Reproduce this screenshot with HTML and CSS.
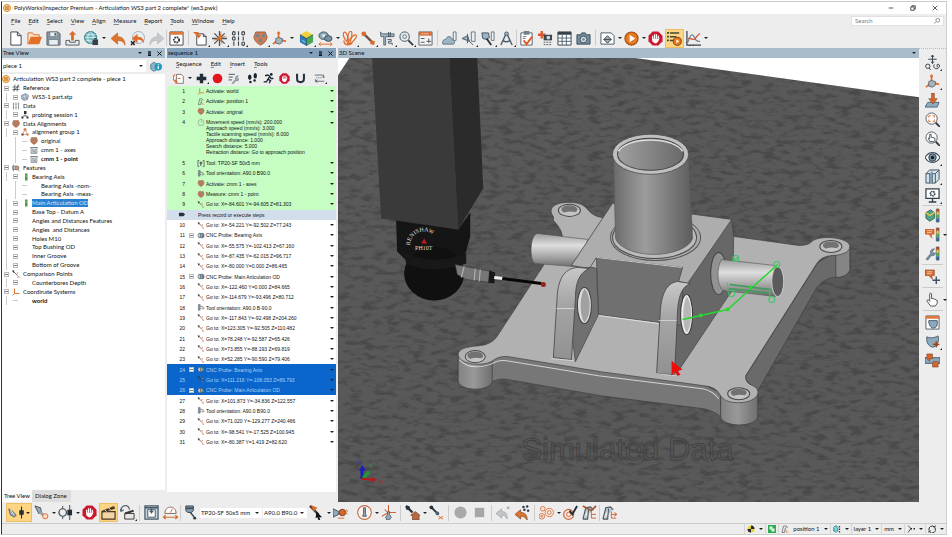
FILE: index.html
```html
<!DOCTYPE html>
<html lang="en">
<head>
<meta charset="utf-8">
<title>PolyWorks|Inspector Premium</title>
<link rel="stylesheet" href="styles.css">
</head>
<body>
<svg class="defs" aria-hidden="true">
  <symbol id="logo" viewBox="0 0 16 16"><circle cx="8" cy="8" r="7" fill="#f6d9a8" stroke="#e08a1e" stroke-width="2"/><path d="M6 4v8M10 4v8" stroke="#b5560e" stroke-width="2"/></symbol>
  <symbol id="new" viewBox="0 0 16 16"><path d="M3 1h7l4 4v10H3zM10 1v4h4" fill="#fff" stroke="#3b4249"/></symbol>
  <symbol id="open" viewBox="0 0 16 16"><path d="M1 14V2h5l1 2h6v3" fill="#fbe0cc" stroke="#e0702a"/><path d="M1 14L4 6h12l-3 8z" fill="#e0702a"/></symbol>
  <symbol id="save" viewBox="0 0 16 16"><path d="M1 1h12l2 2v12H1z" fill="#8b98a3" stroke="#5c6871"/><path d="M4 1h8v5H4zM3 9h10v6H3z" fill="#e8edf1" stroke="#5c6871" stroke-width=".7"/><path d="M9 2h2v3H9z" fill="#5c6871"/></symbol>
  <symbol id="export" viewBox="0 0 16 16"><path d="M1 10v5h14v-5h-4v2H5v-2z" fill="#e7ebee" stroke="#4c565e"/><path d="M8 0l4 4H9.500v6h-3V4H4z" fill="#df6a2a"/></symbol>
  <symbol id="globe" viewBox="0 0 16 16"><circle cx="7" cy="7" r="6.500" fill="#74b3bd" stroke="#2f7d8a"/><path d="M1 7h12M7 1c-4 3-4 9 0 12M7 1c4 3 4 9 0 12M2 4h10M2 10h10" stroke="#e7f6f8" fill="none" stroke-width=".8"/><path d="M9 9h6v6H9z" fill="#34424d"/><path d="M11 9V8h2v1" stroke="#34424d" fill="none"/></symbol>
  <symbol id="undo" viewBox="0 0 16 16"><path d="M0 8l7-6v4c5 0 8 3 8 9-2-4-4-5-8-5v4z" fill="#e0742d" stroke="#b9500f" stroke-width=".6"/></symbol>
  <symbol id="undox" viewBox="0 0 16 16"><circle cx="9" cy="7" r="6.500" fill="#e8edf0" stroke="#a3aeb7"/><path d="M2 8l6-5v3c5 0 7 3 7 7-2-3-4-4-7-4v4z" fill="#df6a2a"/><path d="M1 11l4 4M5 11l-4 4" stroke="#222" stroke-width="1.500"/></symbol>
  <symbol id="redo" viewBox="0 0 16 16"><path d="M16 8L9 2v4c-5 0-8 3-8 9 2-4 4-5 8-5v4z" fill="#c6c9cb" stroke="#b0b4b7" stroke-width=".6"/></symbol>
  <symbol id="setwin" viewBox="0 0 16 16"><path d="M1 1h14v14H1z" fill="#fff" stroke="#3f4850"/><path d="M1 1h14v3H1z" fill="#df7a3c"/><circle cx="8" cy="9.500" r="2.800" fill="none" stroke="#2e3940" stroke-width="2" stroke-dasharray="1.800 .8"/></symbol>
  <symbol id="docin" viewBox="0 0 16 16"><path d="M4 3h7l3 3v9H4z" fill="#fff" stroke="#3f4850"/><path d="M11 3v3h3" fill="none" stroke="#3f4850"/><path d="M0 1h6v3h3L6 8 3 4h0z" fill="#df6a2a"/></symbol>
  <symbol id="star" viewBox="0 0 16 16"><path d="M8 0v16M0 8h16M2.500 2.500l11 11M13.500 2.500l-11 11" stroke="#4a545c" stroke-width="1.400"/><path d="M10 0L7 7l-6 3 7-1 3 6-1-7 6-3-6 1z" fill="#dd7331"/></symbol>
  <symbol id="bits" viewBox="0 0 16 16"><g fill="none" stroke="#39444c" stroke-width="1.200"><ellipse cx="3" cy="2.500" rx="1.500" ry="1.800"/><path d="M8 .3v4.400"/><ellipse cx="13" cy="2.500" rx="1.500" ry="1.800"/><ellipse cx="3" cy="8" rx="1.500" ry="1.800"/><path d="M8 5.800v4.400M13 5.800v4.400M3 11.300v4.400M8 11.300v4.400"/><ellipse cx="13" cy="13.500" rx="1.500" ry="1.800"/></g></symbol>
  <symbol id="shield" viewBox="0 0 16 16"><path d="M3 1h10l2 5c0 4-3 7-7 9-4-2-7-5-7-9z" fill="#d97a4c" stroke="#7d5038" stroke-width=".8"/><circle cx="5" cy="5" r="2" fill="#77848e"/><circle cx="11" cy="5" r="2" fill="#77848e"/><circle cx="8" cy="10" r="2.200" fill="#77848e"/></symbol>
  <symbol id="axes" viewBox="0 0 16 16"><path d="M7 9V1M7 9l8 2M7 9l-6 5" stroke="#df6a2a" stroke-width="1.800"/><path d="M4 8l3-1 4 1v4l-3 2-4-1z" fill="#a7b2ba" stroke="#4c565e" stroke-width=".8"/><path d="M5 3l2-3 2 3z" fill="#df6a2a"/></symbol>
  <symbol id="cube" viewBox="0 0 16 16"><path d="M8 0l7 4-7 4-7-4z" fill="#f0d23a"/><path d="M1 4l7 4v8l-7-4z" fill="#3577b4"/><path d="M15 4L8 8v8l7-4z" fill="#48a857"/><path d="M1 4l7 4 7-4M8 8v8" stroke="#25435f" fill="none" stroke-width=".8"/><path d="M3 9l4 2v2l-4-2z" fill="#52b8ce"/></symbol>
  <symbol id="gauge" viewBox="0 0 16 16"><ellipse cx="6" cy="5" rx="5" ry="4" fill="#90a9bb" stroke="#3c5261"/><ellipse cx="11" cy="8" rx="4" ry="3" fill="#7790a3" stroke="#3c5261"/><circle cx="6" cy="5" r="1.500" fill="#eee"/><path d="M1 14h14M3 12l-2 2 2 2M13 12l2 2-2 2" fill="none" stroke="#df6a2a"/></symbol>
  <symbol id="rings" viewBox="0 0 16 16"><g fill="none" stroke="#df6a2a" stroke-width="1.300"><ellipse cx="4" cy="6" rx="2" ry="5" transform="rotate(-20 4 6)"/><ellipse cx="8" cy="7" rx="2" ry="7" transform="rotate(12 8 7)"/><ellipse cx="11" cy="9" rx="2" ry="6" transform="rotate(42 11 9)"/><path d="M2 10c0 5 5 6 9 3"/></g></symbol>
  <symbol id="bone" viewBox="0 0 16 16"><path d="M3 3l10 10" stroke="#6c5344" stroke-width="2.500"/><circle cx="3" cy="3" r="2.500" fill="#df6a2a"/><path d="M10 10l5 1-1 4-4-1z" fill="#df6a2a"/></symbol>
  <symbol id="caliper" viewBox="0 0 16 16"><path d="M0 1l3 2h12v3H6v9H4V6H1z" fill="#9fb3c3" stroke="#465661" stroke-width=".8"/><path d="M9 1v5h2V1M8 9h4v2H9v2h4v2" fill="none" stroke="#465661"/></symbol>
  <symbol id="mag" viewBox="0 0 16 16"><circle cx="6" cy="6" r="5" fill="#e5ecf1" stroke="#68757f" stroke-width="1.300"/><path d="M10 10l5 5" stroke="#313c44" stroke-width="2"/><circle cx="6" cy="6" r="2" fill="none" stroke="#68757f"/></symbol>
  <symbol id="report" viewBox="0 0 16 16"><path d="M1 1h14v14H1z" fill="#f4f4f4" stroke="#59646c"/><path d="M1 1h14v4H1z" fill="#d8713d"/><path d="M3 8h4M3 12h4M9 11h5M11.500 8v5" stroke="#4c565e"/><path d="M4 3h8" stroke="#fff" stroke-dasharray="1 1"/></symbol>
  <symbol id="cloud" viewBox="0 0 16 16"><path d="M1 14c-1-4 1-5 3-5 1-4 6-4 7 0 3 0 3 5 1 5z" fill="#9db4c5" stroke="#5f7686"/><path d="M12 1h3v9h-3z" fill="#eee" stroke="#68757f"/></symbol>
  <symbol id="tri" viewBox="0 0 16 16"><path d="M1 8l6-3 2 6z" fill="#9db4c5" stroke="#4e5c67"/><path d="M11 1h4v10h-4z" fill="#eee" stroke="#68757f"/><path d="M8 10l5 5M7 3v10" stroke="#4e5c67"/></symbol>
  <symbol id="probe" viewBox="0 0 16 16"><path d="M2 2h7l1 5-3 2-4-1z" fill="#9db4c5" stroke="#3f505e"/><path d="M7 8l5 7" stroke="#2b3740" stroke-width="2"/><path d="M12 1h3v9h-3z" fill="#eee" stroke="#68757f"/></symbol>
  <symbol id="tool" viewBox="0 0 16 16"><path d="M3 1h8v5l-2 2H5L3 6z" fill="#8298a8" stroke="#3b4a55"/><path d="M3 3.500h8M8 8l4 5" stroke="#3b4a55" stroke-width="1.500"/><circle cx="12.500" cy="14" r="1.600" fill="#2b3740"/></symbol>
  <symbol id="compass" viewBox="0 0 16 16"><path d="M8 2L2 15M8 2l6 13M4 10q4 3 8 0" fill="none" stroke="#4d5c68" stroke-width="1.500"/><circle cx="8" cy="3" r="2" fill="#9db4c5" stroke="#4d5c68"/></symbol>
  <symbol id="clip" viewBox="0 0 16 16"><path d="M2 2h12v13H2z" fill="#fff" stroke="#53606a"/><path d="M5 0h6v4H5z" fill="#71808b"/><path d="M5 10l3 4 6-8" fill="none" stroke="#df5a22" stroke-width="2"/><path d="M4 6h4M4 8h3" stroke="#71808b"/></symbol>
  <symbol id="camplus" viewBox="0 0 16 16"><path d="M4 0v8M0 4h8" stroke="#dc5b2b" stroke-width="2.500"/><path d="M6 4h9v6H6z" fill="#3d464e"/><circle cx="11" cy="7" r="2" fill="#cfd8de"/><path d="M6 12h9M6 14.500h9" stroke="#555f67" stroke-dasharray="2 1"/></symbol>
  <symbol id="grid" viewBox="0 0 16 16"><path d="M1 1h14v14H1z" fill="#fff" stroke="#34424d"/><path d="M1 1h14v3H1z" fill="#34424d"/><path d="M1 7.500h14M1 11h14M5.500 4v11M10 4v11" stroke="#4d6272"/></symbol>
  <symbol id="cam" viewBox="0 0 16 16"><path d="M1 4h4l1-2h4l1 2h4v10H1z" fill="#748a9a" stroke="#3b4e5c"/><circle cx="8" cy="9" r="3.500" fill="#dde5ea" stroke="#3b4e5c"/><circle cx="8" cy="9" r="1.500" fill="#748a9a"/></symbol>
  <symbol id="layers" viewBox="0 0 16 16"><path d="M1 2h11l3 3v9H1z" fill="#fff" stroke="#4d575f"/><path d="M4 9l4-4 4 4-4 4zM4 9h8" fill="#9fb0bb" stroke="#3b454d"/></symbol>
  <symbol id="play" viewBox="0 0 16 16"><circle cx="8" cy="8" r="7" fill="#e77a1e" stroke="#a04611" stroke-width="1.200"/><path d="M6 4l6 4-6 4z" fill="#fff"/></symbol>
  <symbol id="stop" viewBox="0 0 16 16"><path d="M5 .5h6L15.500 5v6L11 15.500H5L.5 11V5z" fill="#cc1730"/><path d="M5 9V5M7 8V3.500M9 8V3.500M11 8V5" stroke="#fff" stroke-width="1.300" fill="none"/><path d="M4.500 8H11l1.500-1-1.500 4-2 2H7l-2.500-2z" fill="#fff"/></symbol>
  <symbol id="steps" viewBox="0 0 16 16"><path d="M3 2h10M3 6h7M3 10h4" stroke="#414a36" stroke-width="1.600"/><path d="M0 2h2M0 6h2M0 10h2" stroke="#414a36" stroke-width="2"/><circle cx="11" cy="11" r="4.300" fill="#e77a1e" stroke="#823d10"/><path d="M10 9l3 2-3 2z" fill="#fff"/></symbol>
  <symbol id="chart" viewBox="0 0 16 16"><path d="M1 0v15h15M1 12h-1M4 15v1M8 15v1" fill="none" stroke="#35424c" stroke-width="1.300"/><path d="M2 12c3-9 5-10 7-5s4 4 6 4" fill="none" stroke="#6b8394" stroke-width="1.300"/><path d="M2 8c4-1 6 3 8 0s3-5 5-5" fill="none" stroke="#d95630" stroke-width="1.300"/></symbol>
  <symbol id="info" viewBox="0 0 16 16"><path d="M1 6l4-3 4 2v8l-4 2-4-3z" fill="#91b2c6" stroke="#3f6a82"/><circle cx="11" cy="9" r="5" fill="#1f9cc4"/><path d="M11 8v4M11 5.500v1.500" stroke="#fff" stroke-width="1.600"/></symbol>
  <symbol id="plus" viewBox="0 0 16 16"><path d="M8 1v14M1 8h14" stroke="#1f2d3a" stroke-width="5"/></symbol>
  <symbol id="rec" viewBox="0 0 16 16"><circle cx="8" cy="8" r="7" fill="#e2141c"/></symbol>
  <symbol id="props" viewBox="0 0 16 16"><path d="M1 2h9M1 6h6M1 10h5" stroke="#6b7780" stroke-width="1.500"/><path d="M6 15l5-6c-1-3 1-5 4-5l-2 3 2 2 1-1c0 3-2 4-4 3l-5 5z" fill="#9fabb4" stroke="#5b666f" stroke-width=".7"/></symbol>
  <symbol id="feet" viewBox="0 0 16 16"><ellipse cx="4" cy="6" rx="2.500" ry="4" fill="#182531"/><circle cx="5" cy="13" r="1.800" fill="#182531"/><ellipse cx="12" cy="4" rx="2.500" ry="4" fill="#182531"/><circle cx="11" cy="11" r="1.800" fill="#182531"/></symbol>
  <symbol id="run" viewBox="0 0 16 16"><circle cx="12" cy="2" r="2" fill="#182531"/><path d="M3 4l4-1 3 2-3 4 4 2-2 4M7 9l-2 4H1M9 5l3 3h3" fill="none" stroke="#182531" stroke-width="1.900"/></symbol>
  <symbol id="magnet" viewBox="0 0 16 16"><path d="M3 1v7c0 7 10 7 10 0V1" fill="none" stroke="#26343f" stroke-width="3"/></symbol>
  <symbol id="loop" viewBox="0 0 16 16"><path d="M1 3h13v4M12 5l2 2 2-2M15 12H2V9M5 10l-3 2 3 2" fill="none" stroke="#5b6770" stroke-width="1.300"/><path d="M3 7h8" stroke="#5b6770" stroke-dasharray="2 1"/></symbol>
  <symbol id="seqdoc" viewBox="0 0 16 16"><path d="M5 2h7l3 3v10H5z" fill="#fff" stroke="#5a4a42"/><path d="M3 2C-1 5-1 12 5 13M3 10l3 3-3 2M7 8h4" fill="none" stroke="#e06a2c" stroke-width="1.500"/></symbol>
  <symbol id="move" viewBox="0 0 16 16"><path d="M8 0v9M3.500 4.500h9M6.500 2L8 0l1.500 2M6.500 7L8 9l1.500-2" fill="none" stroke="#303c46"/><circle cx="3" cy="12" r="2.300" fill="none" stroke="#303c46"/><path d="M4.500 14L6 16M10 10c-2 3 1 6 4 4s1-5-1-4v3" fill="none" stroke="#303c46"/></symbol>
  <symbol id="plane" viewBox="0 0 16 16"><path d="M3 10h12l-2 5H0z" fill="#91adc1" stroke="#496376"/><path d="M7 0h3v6h3l-4.500 6L4 6h3z" fill="#d9652a" stroke="#7c4830" stroke-width=".6"/></symbol>
  <symbol id="fit" viewBox="0 0 16 16"><circle cx="7" cy="7" r="6" fill="#fff" stroke="#4d5a64"/><path d="M4 6V4h2M8 4h2v2M10 8v2H8M6 10H4V8" fill="none" stroke="#df6a2a"/><path d="M11.500 11.500L16 16" stroke="#303c46" stroke-width="2"/></symbol>
  <symbol id="handmag" viewBox="0 0 16 16"><circle cx="7" cy="7" r="6" fill="#fff" stroke="#4d5a64"/><path d="M5 11L3.500 7.500 5 8V3.500h1.500v3l4 1V10l-1 1.500z" fill="#fff" stroke="#36424c" stroke-width=".9"/><path d="M11.500 11.500L16 16" stroke="#303c46" stroke-width="2"/></symbol>
  <symbol id="eye" viewBox="0 0 16 16"><path d="M0 8c4-7 12-7 16 0-4 7-12 7-16 0z" fill="#fff" stroke="#41505c" stroke-width="1.200"/><circle cx="8" cy="8" r="4" fill="#7890a2" stroke="#2f3c46"/><circle cx="8" cy="8" r="1.800" fill="#131c23"/></symbol>
  <symbol id="box" viewBox="0 0 16 16"><path d="M1 5l4-4h10v10l-4 4H1z" fill="#d8e2e9" stroke="#41505c"/><path d="M1 5h10v10M11 5l4-4M5 5v10M8 5v10" fill="none" stroke="#41505c"/><path d="M5 5l3-4v14H5z" fill="#7fa0b8"/></symbol>
  <symbol id="monitor" viewBox="0 0 16 16"><path d="M1 1h14v10H1z" fill="#fff" stroke="#34404a" stroke-width="1.300"/><path d="M4 15h8M8 11v4" stroke="#34404a" stroke-width="1.500"/><circle cx="8" cy="6" r="2.300" fill="none" stroke="#34404a" stroke-width="1.700" stroke-dasharray="1.500 .6"/></symbol>
  <symbol id="cmap" viewBox="0 0 16 16"><path d="M12 1h3v4h-3z" fill="#d9402b"/><path d="M12 4h3v3h-3z" fill="#f0cb36"/><path d="M12 7h3v4h-3z" fill="#58b34f"/><path d="M12 11h3v4h-3z" fill="#2f67b5"/><path d="M12 1h3v14h-3z" fill="none" stroke="#455" stroke-width=".6"/></symbol>
  <symbol id="cubemap" viewBox="0 0 16 16"><path d="M1 5l5-3 4 3v6l-5 3-4-3z" fill="#4fa28a" stroke="#35624f"/><path d="M1 5l4 3 5-3" fill="none" stroke="#f0cb36" stroke-width="1.500"/><use href="#cmap"/></symbol>
  <symbol id="flagmap" viewBox="0 0 16 16"><path d="M0 2h10v6H7l1 5-4-5H0z" fill="#d9652a"/><path d="M2 4h6M2 6h5" stroke="#f6cfb5"/><use href="#cmap"/></symbol>
  <symbol id="wrenchmap" viewBox="0 0 16 16"><path d="M1 14l5-6c-1-3 1-5 4-5L8 6l2 2 1-1c0 3-2 4-4 3l-4 5z" fill="#7891a3" stroke="#465b69" stroke-width=".6"/><use href="#cmap"/></symbol>
  <symbol id="flagmove" viewBox="0 0 16 16"><path d="M0 1h10v6H7l1 4-4-4H0z" fill="#d9652a" stroke="#8c4522" stroke-width=".6"/><path d="M2 3h6M2 5h5" stroke="#f6cfb5"/><path d="M12 8v8M8 12h8" stroke="#41505c" stroke-width="1.500"/></symbol>
  <symbol id="hand" viewBox="0 0 16 16"><path d="M5 9V2c0-1 2-1 2 0v5h1.500l1.500.5 3 1.500v3l-2 3H6L2 9.500C2 8 4 8 5 10z" fill="#fff" stroke="#47525b"/></symbol>
  <symbol id="winsh" viewBox="0 0 16 16"><path d="M1 1h14v14H1z" fill="#fff" stroke="#515e68"/><path d="M1 1h14v3H1z" fill="#df7a3c"/><path d="M4 6h9v4c0 3-3 4-5 4-2-1-4-3-4-8z" fill="#8da9bd" stroke="#465b69"/></symbol>
  <symbol id="patch" viewBox="0 0 16 16"><path d="M2 3c4 2 8 1 12-1 1 5 0 10-5 12C4 14 1 9 2 3z" fill="#8da9bd" stroke="#465b69"/><circle cx="12" cy="11" r="2.500" fill="#d9652a"/><path d="M12 7.500v7M8.500 11h7" stroke="#7a4128"/></symbol>
  <symbol id="flow" viewBox="0 0 16 16"><path d="M0 5h16v6H0z" fill="#8da9bd" stroke="#465b69"/><path d="M2 1h6v5H5v3L2 6zM9 9h5v6H8v-3z" fill="#d9652a" stroke="#7a4128" stroke-width=".6"/></symbol>
  <symbol id="dev" viewBox="0 0 24 16"><path d="M1 3l6 4 4 5-3 2-5-3z" fill="#99aab7" stroke="#47525b"/><path d="M3 4l5 7" stroke="#fff"/><path d="M18 0v16" stroke="#232c33" stroke-width="1.500"/><path d="M15 5h6v6h-6z" fill="#232c33"/></symbol>
  <symbol id="dev2" viewBox="0 0 16 16"><path d="M1 1l6 2 1 5-3 1z" fill="#99aab7" stroke="#47525b"/><path d="M6 7l5 5" stroke="#93a2ad" stroke-width="3"/><circle cx="12" cy="12" r="2.800" fill="#f7d8c2" stroke="#df6a2a"/></symbol>
  <symbol id="dev3" viewBox="0 0 16 16"><circle cx="5" cy="8" r="4" fill="none" stroke="#3c4851" stroke-width="1.300"/><path d="M5 1v3M5 12v3M12.500 0v16" stroke="#3c4851"/><path d="M10 5h5v6h-5z" fill="#232c33"/></symbol>
  <symbol id="clap" viewBox="0 0 16 16"><path d="M1 7h14v8H1z" fill="#f4d5a8" stroke="#493a27" stroke-width="1.300"/><path d="M1 6l13-5 1 3L2 8z" fill="#493a27"/><path d="M4 5l2 2M8 3l2 2" stroke="#fff"/></symbol>
  <symbol id="clap2" viewBox="0 0 16 16"><path d="M5 9h10v6H5z" fill="#e7e7e7" stroke="#3b3630"/><path d="M5 8l9-3 1 2-9 3z" fill="#3b3630"/><path d="M1 7c0-8 9-8 9-2M1 7l-1-3M1 7l3-2" fill="none" stroke="#58656f" stroke-width="1.300"/></symbol>
  <symbol id="machine" viewBox="0 0 16 16"><path d="M1 1h14v14H1z" fill="#c7d3dc" stroke="#475866" stroke-width="1.300"/><path d="M4 5h8v8H4z" fill="#fff" stroke="#475866"/><path d="M1 3h14M8 4v5M6 7h4" stroke="#475866" stroke-width="1.500"/></symbol>
  <symbol id="dial" viewBox="0 0 16 16"><path d="M2 9c0-9 12-9 12 0z" fill="#fff" stroke="#81634f"/><path d="M8 8l2-4" stroke="#df6a2a"/><path d="M0 13h16M3 11l-3 2 3 2M13 11l3 2-3 2" fill="none" stroke="#df6a2a" stroke-width="1.200"/></symbol>
  <symbol id="arrowp" viewBox="0 0 16 16"><path d="M1 1l9 9" stroke="#55402f" stroke-width="2.500"/><path d="M2 0l7 3-4 4z" fill="#df6a2a"/><path d="M8 7l6 6-3 0 1 3-2 0-1-3-2 1z" fill="#111"/></symbol>
  <symbol id="pair" viewBox="0 0 16 16"><path d="M0 4l6 3v3l-6 3z" fill="#91a9ba" stroke="#47525b"/><circle cx="10" cy="8" r="3.500" fill="#d9652a" stroke="#74452b"/><path d="M5 14h7M14 5l1.500 1-1.500 2 1.500 2" stroke="#df6a2a" fill="none"/></symbol>
  <symbol id="therm" viewBox="0 0 16 16"><circle cx="8" cy="8" r="7.300" fill="#faf3ee" stroke="#c96c43" stroke-width="1.200"/><path d="M7 3h2v6l1 3H6l1-3z" fill="#91a9ba" stroke="#47606f"/></symbol>
  <symbol id="probeax" viewBox="0 0 16 16"><path d="M8 8V0M8 8l8 0M8 8l-7 4M4 5l2 2" stroke="#cf6235" stroke-width="1.200"/><path d="M7 7h2v3l2 3-2 3H6l-1-3 2-3z" fill="#91a9ba" stroke="#47525b" stroke-width=".8"/></symbol>
  <symbol id="home" viewBox="0 0 16 16"><path d="M1 1l7 7" stroke="#28333c" stroke-width="2.500"/><circle cx="3" cy="3" r="2.300" fill="#28333c"/><path d="M6 11l5-4 5 4-1 0v5H8v-5z" fill="#b96842" stroke="#704328" stroke-width=".7"/></symbol>
  <symbol id="clearp" viewBox="0 0 16 16"><path d="M2 2l8 8" stroke="#28333c" stroke-width="2"/><circle cx="2.500" cy="2.500" r="2" fill="#28333c"/><circle cx="9" cy="9" r="2" fill="#4b6375"/><path d="M10 12l5 3M15 12l-5 3" stroke="#df6a2a"/></symbol>
  <symbol id="disc" viewBox="0 0 16 16"><circle cx="8" cy="8" r="6.500" fill="#a9a9a9"/></symbol>
  <symbol id="square" viewBox="0 0 16 16"><path d="M3 3h10v10H3z" fill="#a6a6a6"/></symbol>
  <symbol id="undog" viewBox="0 0 16 16"><path d="M0 9l6-5v3c5 0 6 3 6 8-2-3-3-4-6-4v3z" fill="#c3c6c8" stroke="#9da2a5" stroke-width=".7"/><circle cx="13" cy="3" r="1.400" fill="#aaa"/></symbol>
  <symbol id="undop" viewBox="0 0 16 16"><path d="M0 10l6-5v3c5 0 7 3 7 8-2-3-4-4-7-4v3z" fill="#e0742d" stroke="#74401b" stroke-width=".7"/><g fill="#283746"><circle cx="9" cy="2" r="1.300"/><circle cx="13" cy="1.500" r="1.300"/><circle cx="14" cy="6" r="1.300"/><circle cx="10" cy="5" r="1.300"/></g></symbol>
  <symbol id="targets" viewBox="0 0 16 16"><g fill="#fae6da" stroke="#d5794d"><circle cx="11" cy="8" r="4.500"/><circle cx="3" cy="12" r="3"/><circle cx="4" cy="4" r="2.500"/><circle cx="11" cy="8" r="2"/><circle cx="3" cy="12" r="1"/></g></symbol>
  <symbol id="targetok" viewBox="0 0 16 16"><circle cx="6" cy="10" r="5.300" fill="#fae6da" stroke="#c96c43" stroke-width="1.300"/><circle cx="6" cy="10" r="2.300" fill="none" stroke="#c96c43"/><path d="M7 6l3 4 5-9" fill="none" stroke="#222f3a" stroke-width="2"/></symbol>
  <symbol id="arm" viewBox="0 0 16 16"><path d="M1 15L4 3l5-1 3 3M1 15h5L7 4" fill="#b9c5ce" stroke="#4a5862" stroke-width="1.200"/><path d="M10 7v7h5M10 10h5M13 8l3 2-3 2" fill="none" stroke="#cf6235"/></symbol>
  <symbol id="armx" viewBox="0 0 16 16"><path d="M1 15L4 3l5-1 3 3M1 15h5L7 4" fill="#b9c5ce" stroke="#4a5862" stroke-width="1.200"/><path d="M10 7v7h5M10 10h5" fill="none" stroke="#cf6235"/><path d="M1 1l9 5 5-5" fill="none" stroke="#a3582f" stroke-width="1.800"/></symbol>
  <symbol id="ball" viewBox="0 0 16 16"><circle cx="8" cy="8" r="7" fill="#e7d239"/><path d="M8 1a7 7 0 0 1 7 7H8zM8 15a7 7 0 0 1-7-7h7z" fill="#28272a"/></symbol>
  <symbol id="green" viewBox="0 0 16 16"><path d="M0 0h16v16H0z" fill="#2cab53"/><path d="M3 3h6v4h4v6H7V9H3z" fill="#e2f7e7"/></symbol>
  <symbol id="pos" viewBox="0 0 16 16"><path d="M2 15L5 2h6l2 4M2 15h5L9 5" fill="none" stroke="#55626c" stroke-width="1.500"/><path d="M10 9v5h5" fill="none" stroke="#df6a2a" stroke-width="1.300"/></symbol>
  <symbol id="tealcube" viewBox="0 0 16 16"><path d="M1 4l5-3 4 3v8l-4 3-5-3z" fill="#56b9c4" stroke="#217d89"/><path d="M1 4l5 3 4-3M6 7v8" fill="none" stroke="#e6fafb"/><path d="M13 2v3M13 7v3M13 12v3" stroke="#26434b" stroke-width="2.500"/></symbol>
  <symbol id="snap" viewBox="0 0 16 16"><path d="M2 1l6 6-6 8" fill="none" stroke="#222" stroke-width="1.500"/><path d="M7 6h3v3H7zM13 6h3v3h-3z" fill="#222"/></symbol>
  <symbol id="sync" viewBox="0 0 16 16"><path d="M2 10A6.500 6.500 0 0 1 13 4M14 6a6.500 6.500 0 0 1-11 7" fill="none" stroke="#2d3b45" stroke-width="2"/><path d="M10 5h5V0zM6 11H1v5z" fill="#2d3b45"/></symbol>
  <symbol id="search" viewBox="0 0 16 16"><circle cx="10" cy="6" r="5" fill="none" stroke="#444" stroke-width="1.500"/><path d="M6 10l-5 5" stroke="#444" stroke-width="1.500"/></symbol>
  <symbol id="hash" viewBox="0 0 16 16"><path d="M6 1L4 15M12 1l-2 14M1 6h14M1 11h14M3 14L14 2" stroke="#4d5357" stroke-width="1.500"/></symbol>
  <symbol id="part" viewBox="0 0 16 16"><path d="M1 5l8-4 6 4-2 8-7 2-5-4z" fill="#9aa8bd" stroke="#586778"/><path d="M1 9l13-4M6 3l3 11" stroke="#e7edf4"/></symbol>
  <symbol id="bars" viewBox="0 0 16 16"><path d="M3 1v14M8 1v14M13 1v14" stroke="#777" stroke-width="1.500"/><path d="M1 4h14M1 11h14" stroke="#aaa"/></symbol>
  <symbol id="session" viewBox="0 0 16 16"><path d="M6 0h5v6H6zM1 11h4v4H1zM11 11h4v4h-4z" fill="#333"/><path d="M8 6v4M3 10h10" stroke="#333"/><path d="M7 8l4 4" stroke="#5a87a5" stroke-width="2"/></symbol>
  <symbol id="agroup" viewBox="0 0 16 16"><path d="M8 2L3 13h10z" fill="none" stroke="#9c6038"/><circle cx="8" cy="3" r="3" fill="#d9824b"/><circle cx="3" cy="13" r="2.500" fill="#7b5544"/><circle cx="13" cy="13" r="2.500" fill="#d9824b"/></symbol>
  <symbol id="ruler" viewBox="0 0 16 16"><path d="M2 3h12v12H2z" fill="#dde1e4" stroke="#596066"/><path d="M0 3h16M5 6v3M8 6v5M11 6v3M3 12h10M7 10l4 3" stroke="#596066"/></symbol>
  <symbol id="feat" viewBox="0 0 16 16"><path d="M1 4h8v7H1z" fill="#d5d8da" stroke="#555"/><circle cx="10" cy="8" r="4" fill="#c69986" stroke="#555"/><path d="M12 11l3 4M3 1v14" stroke="#555"/></symbol>
  <symbol id="greenbar" viewBox="0 0 16 16"><path d="M8 1h5v14H8z" fill="#4b9a47"/><path d="M8 6h5" stroke="#c7e6c4"/></symbol>
  <symbol id="goto" viewBox="0 0 16 16"><path d="M2 2l8 8" stroke="#333" stroke-width="1.500"/><path d="M0 1l5 0-2 5z" fill="#333"/><circle cx="11" cy="6" r="1.300" fill="#d98353"/><path d="M10 10l4 5M10 14h5" stroke="#be5140"/></symbol>
  <symbol id="wax" viewBox="0 0 16 16"><path d="M5 1v10h10M5 11l-4 4" fill="none" stroke="#dc6b21" stroke-width="1.800"/></symbol>
  <symbol id="speed" viewBox="0 0 16 16"><path d="M2 11V6c0-6 12-6 12 0v5M1 14h14M8 8l2-4" fill="none" stroke="#7a8672" stroke-width="1.400"/></symbol>
  <symbol id="toolr" viewBox="0 0 16 16"><path d="M4 1H1v14h3M12 1h3v14h-3" fill="none" stroke="#333" stroke-width="1.500"/><path d="M5 4h6v4H9v5H6V8H5z" fill="#55606a"/></symbol>
  <symbol id="orient" viewBox="0 0 16 16"><path d="M2 1h4v13H2zM6 5h4l4 3" fill="#8c979f" stroke="#4a535a"/><path d="M6 10h9M12 7l3 3-3 3" fill="none" stroke="#4a535a"/></symbol>
  <symbol id="cnc" viewBox="0 0 16 16"><path d="M4 3h9l2 3v5l-2 2H4z" fill="#6f8091" stroke="#354250"/><ellipse cx="4" cy="8" rx="3" ry="5" fill="#c2ccd5" stroke="#354250"/><path d="M9 4v8" stroke="#d4dce3"/></symbol>
  <symbol id="tag" viewBox="0 0 16 16"><path d="M1 4h10l4 4-4 4H1z" fill="#263240"/></symbol>
</svg>

<div class="window">
  <header class="titlebar">
    <svg class="i8"><use href="#logo"/></svg>
    <h1>PolyWorks|Inspector Premium - Articulation WS3 part 2 complete* (ws3.pwk)</h1>
    <div class="caption">
      <button aria-label="Minimize"><svg viewBox="0 0 16 16"><path d="M2 8h12" stroke="#222" stroke-width="2"/></svg></button>
      <button aria-label="Restore"><svg viewBox="0 0 16 16"><path d="M2 5h9v9H2zM5 5V2h9v9h-3" fill="none" stroke="#222" stroke-width="2"/></svg></button>
      <button aria-label="Close"><svg viewBox="0 0 16 16"><path d="M2 2l12 12M14 2L2 14" stroke="#222" stroke-width="2"/></svg></button>
    </div>
  </header>

  <nav class="menubar">
    <button>File</button><button>Edit</button><button>Select</button><button>View</button><button>Align</button><button>Measure</button><button>Report</button><button>Tools</button><button>Window</button><button>Help</button>
    <label class="search"><input type="text" placeholder="Search" aria-label="Search"><svg class="i6"><use href="#search"/></svg></label>
  </nav>

  <div class="toolbar main">
    <button class="tb" aria-label="New"><svg><use href="#new"/></svg></button><button class="tb" aria-label="Open"><svg><use href="#open"/></svg></button><button class="tb" aria-label="Save"><svg><use href="#save"/></svg></button><button class="tb" aria-label="Export"><svg><use href="#export"/></svg></button><button class="tb" aria-label="Publish"><svg><use href="#globe"/></svg></button><button class="dd" aria-label="Publish options"></button>
    <i class="gap"></i>
    <button class="tb" aria-label="Undo"><svg><use href="#undo"/></svg></button><button class="tb" aria-label="Undo list"><svg><use href="#undox"/></svg></button><button class="tb" aria-label="Redo"><svg><use href="#redo"/></svg></button>
    <i class="sep"></i>
    <button class="tb" aria-label="Options"><svg><use href="#setwin"/></svg></button>
    <i class="sep wide"></i>
    <button class="tb more" aria-label="Import"><svg><use href="#docin"/></svg></button><button class="tb more" aria-label="Probe"><svg><use href="#star"/></svg></button><button class="tb more" aria-label="Numeric"><svg><use href="#bits"/></svg></button>
    <i class="gap"></i>
    <button class="tb more" aria-label="Alignment"><svg><use href="#shield"/></svg></button><button class="tb" aria-label="Coordinate system"><svg><use href="#axes"/></svg></button><button class="dd" aria-label="Coordinate system options"></button>
    <i class="gap"></i>
    <button class="tb more" aria-label="Color map"><svg><use href="#cube"/></svg></button><button class="tb" aria-label="Gauge"><svg><use href="#gauge"/></svg></button><button class="dd" aria-label="Gauge options"></button>
    <button class="tb more" aria-label="Cross-section"><svg><use href="#rings"/></svg></button><button class="tb more" aria-label="Comparison point"><svg><use href="#bone"/></svg></button><button class="tb more" aria-label="Caliper"><svg><use href="#caliper"/></svg></button><button class="tb more" aria-label="Inspect"><svg><use href="#mag"/></svg></button><button class="tb" aria-label="Controls"><svg><use href="#report"/></svg></button>
    <i class="sep wide"></i>
    <button class="tb" aria-label="Cloud"><svg><use href="#cloud"/></svg></button><button class="tb more" aria-label="Scan"><svg><use href="#tri"/></svg></button><button class="tb more" aria-label="Probe device"><svg><use href="#probe"/></svg></button><button class="tb more" aria-label="Construct"><svg><use href="#compass"/></svg></button>
    <i class="sep"></i>
    <button class="tb" aria-label="Checklist"><svg><use href="#clip"/></svg></button><button class="tb" aria-label="Add snapshot"><svg><use href="#camplus"/></svg></button><button class="tb" aria-label="Table"><svg><use href="#grid"/></svg></button><button class="tb" aria-label="Snapshot"><svg><use href="#cam"/></svg></button>
    <i class="sep wide"></i>
    <button class="tb" aria-label="Report layers"><svg><use href="#layers"/></svg></button><button class="dd" aria-label="Layer options"></button>
    <button class="tb" aria-label="Play"><svg><use href="#play"/></svg></button><button class="dd" aria-label="Play options"></button>
    <button class="tb" aria-label="Stop"><svg><use href="#stop"/></svg></button><button class="tb on" aria-label="Sequence editor"><svg><use href="#steps"/></svg></button><button class="tb" aria-label="Trend chart"><svg><use href="#chart"/></svg></button><button class="dd" aria-label="Chart options"></button>
  </div>

  <div class="body">
    <div class="center">
      <div class="panels">
        <section class="tree-panel">
          <div class="head"><h2>Tree View</h2><span class="tools"><i class="down"></i><i class="pin"></i><svg class="close" viewBox="0 0 10 10"><path d="M1 1l8 8M9 1L1 9" stroke="#111" stroke-width="2"/></svg></span></div>
          <div class="combo-row"><span class="combo"><select aria-label="Piece"><option>piece 1</option></select></span><button class="tb" aria-label="Piece information"><svg><use href="#info"/></svg></button></div>
          <div class="tree-box">
          <ul class="tree">
            <li><svg><use href="#logo"/></svg>Articulation WS3 part 2 complete - piece 1</li>
            <li class="l1"><i class="ex"></i><svg><use href="#hash"/></svg>Reference</li>
            <li class="l2"><i class="ex"></i><svg><use href="#part"/></svg>WS3-1 part.stp</li>
            <li class="l1"><i class="ex"></i><svg><use href="#bars"/></svg>Data</li>
            <li class="l2"><i class="ex"></i><svg><use href="#session"/></svg>probing session 1</li>
            <li class="l1"><i class="ex"></i><svg><use href="#shield"/></svg>Data Alignments</li>
            <li class="l2"><i class="ex"></i><svg><use href="#agroup"/></svg>alignment group 1</li>
            <li class="l3"><i class="leaf"></i><svg><use href="#shield"/></svg>original</li>
            <li class="l3"><i class="leaf"></i><svg><use href="#ruler"/></svg>cmm 1 - axes</li>
            <li class="l3"><i class="leaf"></i><svg><use href="#ruler"/></svg><strong>cmm 1 - point</strong></li>
            <li class="l1"><i class="ex"></i><svg><use href="#feat"/></svg>Features</li>
            <li class="l2"><i class="ex"></i><svg><use href="#greenbar"/></svg>Bearing Axis</li>
            <li class="l3"><i class="leaf"></i><svg></svg>Bearing Axis -nom-</li>
            <li class="l3"><i class="leaf"></i><svg></svg>Bearing Axis -meas-</li>
            <li class="l2"><i class="ex"></i><svg><use href="#greenbar"/></svg><span class="picked">Main Articulation OD</span></li>
            <li class="l2"><i class="ex"></i><svg></svg>Base Top - Datum A</li>
            <li class="l2"><i class="ex"></i><svg></svg>Angles and Distances Features</li>
            <li class="l2"><i class="ex"></i><svg></svg>Angles&nbsp; and Distances</li>
            <li class="l2"><i class="ex"></i><svg></svg>Holes M10</li>
            <li class="l2"><i class="ex"></i><svg></svg>Top Bushing OD</li>
            <li class="l2"><i class="ex"></i><svg></svg>Inner Groove</li>
            <li class="l2"><i class="ex"></i><svg></svg>Bottom of Groove</li>
            <li class="l1"><i class="ex"></i><svg><use href="#goto"/></svg>Comparison Points</li>
            <li class="l2"><i class="ex"></i><svg></svg>Counterbores Depth</li>
            <li class="l1"><i class="ex"></i><svg><use href="#wax"/></svg>Coordinate Systems</li>
            <li class="l2"><i class="leaf"></i><svg></svg><strong>world</strong></li>
          </ul>
          </div>
          <div class="tabs"><button class="active">Tree View</button><button>Dialog Zone</button></div>
        </section>

        <section class="seq-panel">
          <div class="head active"><h2>sequence 1</h2><span class="tools"><i class="down"></i><i class="pin"></i><svg class="close" viewBox="0 0 10 10"><path d="M1 1l8 8M9 1L1 9" stroke="#111" stroke-width="2"/></svg></span></div>
          <nav class="seq-menu"><button>Sequence</button><button>Edit</button><button>Insert</button><button>Tools</button></nav>
          <div class="seq-tools">
            <button class="tb" aria-label="Sequence"><svg><use href="#seqdoc"/></svg></button><button class="dd" aria-label="Sequence options"></button><button class="tb more" aria-label="Add step"><svg><use href="#plus"/></svg></button><button class="tb" aria-label="Record"><svg><use href="#rec"/></svg></button><button class="tb" aria-label="Step properties"><svg><use href="#props"/></svg></button><i class="gap"></i><button class="tb" aria-label="Step"><svg><use href="#feet"/></svg></button><button class="tb" aria-label="Run"><svg><use href="#run"/></svg></button><button class="tb" aria-label="Halt"><svg><use href="#stop"/></svg></button><button class="tb" aria-label="Snap"><svg><use href="#magnet"/></svg></button><i class="gap"></i><button class="tb more" aria-label="Loop"><svg><use href="#loop"/></svg></button>
          </div>
          <div class="seq-box">
          <ul class="steps">
            <li class="done"><span>1</span><i></i><svg><use href="#wax"/></svg><p>Activate: world</p><button aria-label="Step menu"></button></li>
            <li class="done"><span>2</span><i></i><svg><use href="#pos"/></svg><p>Activate: position 1</p><button aria-label="Step menu"></button></li>
            <li class="done"><span>3</span><i></i><svg><use href="#shield"/></svg><p>Activate: original</p><button aria-label="Step menu"></button></li>
            <li class="done tall"><span>4</span><i></i><svg><use href="#speed"/></svg><p>Movement speed (mm/s): 200.000<br>Approach speed (mm/s): 3.000<br>Tactile scanning speed (mm/s): 8.000<br>Approach distance: 1.000<br>Search distance: 5.000<br>Retraction distance: Go to approach position</p><button aria-label="Step menu"></button></li>
            <li class="done"><span>5</span><i></i><svg><use href="#toolr"/></svg><p>Tool: TP20-SF 50x5 mm</p><button aria-label="Step menu"></button></li>
            <li class="done"><span>6</span><i></i><svg><use href="#orient"/></svg><p>Tool orientation: A90.0 B90.0</p><button aria-label="Step menu"></button></li>
            <li class="done"><span>7</span><i></i><svg><use href="#shield"/></svg><p>Activate: cmm 1 - axes</p><button aria-label="Step menu"></button></li>
            <li class="done"><span>8</span><i></i><svg><use href="#shield"/></svg><p>Measure: cmm 1 - point</p><button aria-label="Step menu"></button></li>
            <li class="done"><span>9</span><i></i><svg><use href="#goto"/></svg><p>Go to: X=-84.601 Y=-94.605 Z=81.303</p><button aria-label="Step menu"></button></li>
            <li class="prompt"><svg><use href="#tag"/></svg><p>Press record or execute steps</p></li>
            <li><span>10</span><i></i><svg><use href="#goto"/></svg><p>Go to: X=-54.221 Y=-92.502 Z=77.243</p><button aria-label="Step menu"></button></li>
            <li><span>11</span><i class="ex"></i><svg><use href="#cnc"/></svg><p>CNC Probe: Bearing Axis</p><button aria-label="Step menu"></button></li>
            <li><span>12</span><i></i><svg><use href="#goto"/></svg><p>Go to: X=-55.575 Y=-102.413 Z=67.160</p><button aria-label="Step menu"></button></li>
            <li><span>13</span><i></i><svg><use href="#goto"/></svg><p>Go to: X=-87.435 Y=-62.015 Z=96.717</p><button aria-label="Step menu"></button></li>
            <li><span>14</span><i></i><svg><use href="#goto"/></svg><p>Go to: X=-80.000 Y=0.000 Z=86.465</p><button aria-label="Step menu"></button></li>
            <li><span>15</span><i class="ex"></i><svg><use href="#cnc"/></svg><p>CNC Probe: Main Articulation OD</p><button aria-label="Step menu"></button></li>
            <li><span>16</span><i></i><svg><use href="#goto"/></svg><p>Go to: X=-122.460 Y=0.000 Z=84.665</p><button aria-label="Step menu"></button></li>
            <li><span>17</span><i></i><svg><use href="#goto"/></svg><p>Go to: X=-114.679 Y=-93.496 Z=80.712</p><button aria-label="Step menu"></button></li>
            <li><span>18</span><i></i><svg><use href="#orient"/></svg><p>Tool orientation: A90.0 B-90.0</p><button aria-label="Step menu"></button></li>
            <li><span>19</span><i></i><svg><use href="#goto"/></svg><p>Go to: X=-117.843 Y=-92.498 Z=204.260</p><button aria-label="Step menu"></button></li>
            <li><span>20</span><i></i><svg><use href="#goto"/></svg><p>Go to: X=123.305 Y=-92.505 Z=110.482</p><button aria-label="Step menu"></button></li>
            <li><span>21</span><i></i><svg><use href="#goto"/></svg><p>Go to: X=78.248 Y=-92.587 Z=65.426</p><button aria-label="Step menu"></button></li>
            <li><span>22</span><i></i><svg><use href="#goto"/></svg><p>Go to: X=73.855 Y=-88.193 Z=69.819</p><button aria-label="Step menu"></button></li>
            <li><span>23</span><i></i><svg><use href="#goto"/></svg><p>Go to: X=52.285 Y=-90.590 Z=79.406</p><button aria-label="Step menu"></button></li>
            <li class="sel"><span>24</span><i class="ex"></i><svg><use href="#cnc"/></svg><p>CNC Probe: Bearing Axis</p><button aria-label="Step menu"></button></li>
            <li class="sel"><span>25</span><i></i><svg><use href="#goto"/></svg><p>Go to: X=111.216 Y=-108.053 Z=89.793</p><button aria-label="Step menu"></button></li>
            <li class="sel"><span>26</span><i class="ex"></i><svg><use href="#cnc"/></svg><p>CNC Probe: Main Articulation OD</p><button aria-label="Step menu"></button></li>
            <li><span>27</span><i></i><svg><use href="#goto"/></svg><p>Go to: X=101.873 Y=-34.836 Z=122.557</p><button aria-label="Step menu"></button></li>
            <li><span>28</span><i></i><svg><use href="#orient"/></svg><p>Tool orientation: A90.0 B90.0</p><button aria-label="Step menu"></button></li>
            <li><span>29</span><i></i><svg><use href="#goto"/></svg><p>Go to: X=71.020 Y=-129.277 Z=240.466</p><button aria-label="Step menu"></button></li>
            <li><span>30</span><i></i><svg><use href="#goto"/></svg><p>Go to: X=-98.541 Y=-17.525 Z=100.945</p><button aria-label="Step menu"></button></li>
            <li><span>31</span><i></i><svg><use href="#goto"/></svg><p>Go to: X=-80.387 Y=1.419 Z=82.620</p><button aria-label="Step menu"></button></li>
          </ul>
          </div>
        </section>

        <section class="scene-panel">
          <div class="head"><h2>3D Scene</h2><span class="tools"><i class="down"></i></span></div>
          <svg class="scene" viewBox="338 57 580 445" preserveAspectRatio="xMidYMid slice" role="img" aria-label="Machined part with probe">
            <defs>
              <filter id="grain" x="0" y="0" width="100%" height="100%" color-interpolation-filters="sRGB"><feTurbulence type="fractalNoise" baseFrequency=".08 .2" numOctaves="3" seed="7"/><feColorMatrix values="0 0 0 0 .15  0 0 0 0 .15  0 0 0 0 .15  4 0 0 0 -1.900"/></filter>
              <linearGradient id="tube" x1="0" x2="1"><stop offset="0" stop-color="#6a6a6a"/><stop offset=".2" stop-color="#858585"/><stop offset=".4" stop-color="#9c9c9c"/><stop offset=".65" stop-color="#828282"/><stop offset="1" stop-color="#5c5c5c"/></linearGradient>
              <linearGradient id="bore" x1="0" x2="1"><stop offset="0" stop-color="#a0a0a0"/><stop offset="1" stop-color="#696969"/></linearGradient>
              <linearGradient id="pinv" x1="0" y1="0" x2="0" y2="1"><stop offset="0" stop-color="#9a9a9a"/><stop offset=".35" stop-color="#dedede"/><stop offset=".7" stop-color="#a3a3a3"/><stop offset="1" stop-color="#6a6a6a"/></linearGradient>
              <linearGradient id="lug" x1="0" x2="1"><stop offset="0" stop-color="#828282"/><stop offset=".45" stop-color="#999"/><stop offset="1" stop-color="#6e6e6e"/></linearGradient>
              <linearGradient id="arm1" x1="0" y1="0" x2="0" y2="1"><stop offset="0" stop-color="#c8c8c8"/><stop offset=".4" stop-color="#a5a5a5"/><stop offset="1" stop-color="#919191"/></linearGradient>
              <clipPath id="floor"><path d="M350 57H628L918 97V502H338V75z"/></clipPath>
            </defs>
            <path d="M338 57h580v445H338z" fill="#fff"/>
            <g clip-path="url(#floor)"><path d="M338 57h580v445H338z" fill="#595959"/><path d="M338 57h580v445H338z" filter="url(#grain)" opacity=".3"/></g>
            <!-- machine column and probe head -->
            <path d="M372 57h77l9 172-77-11z" fill="#3a3a3a"/><path d="M449 57h28l6 131-25 41z" fill="#2b2b2b"/>
            <path d="M396 220l62 9 12-17v24l-5 18-8 10H410l-13-13z" fill="#151515"/>
            <ellipse cx="434" cy="273" rx="30" ry="27" fill="#101010"/><path d="M404 252q28 14 62 1v10q-34 12-60 0z" fill="#181818"/>
            <path id="arc" d="M410 245a13 13 0 0 1 28 0" fill="none"/>
            <text class="engrave"><textPath href="#arc">RENISHAW</textPath></text><text class="engrave" x="415" y="250">PH10T</text>
            <path d="M424 238l3 5h-6z" fill="#b51c1c"/>
            <path d="M455 264l10 2 26 5-1 11-24-3-9-5z" fill="#777" stroke="#333" stroke-width=".6"/><path d="M464 266l-3 11M475 268l-1 12M480 269l-1 12" stroke="#b9b9b9"/><path d="M489 270l6 2-1 11-6-1z" fill="#181818"/>
            <!-- plate side walls -->
            <g stroke="#3f3f3f" stroke-width=".7">
            <path d="M458 356v24a17 8 0 0 0 34 1q8-4 16-2l92 16 103 13q10 2 17 8v-24l-17-8-103-14-100-17-42 4z" fill="#777"/>
            <path d="M458 356v24a17 8 0 0 0 34 1v-24z" fill="url(#lug)"/>
            <path d="M849 246v24q-4 7-14 7-11 0-19 10l-60 105-12-15 73-115 14-8z" fill="#6a6a6a"/><path d="M835 254l14-8v24q-4 7-14 7z" fill="#858585"/>
            <path d="M720 392v24a18 8 0 0 0 37 0v-23z" fill="url(#lug)"/>
            <!-- plate top -->
            <path d="M553 216c-6-7 0-14 15-14 12 0 16 3 21 9q5 5 12 6l132 19 65 9q10 0 13-4c8-7 38-4 38 5 0 6-9 9-18 9q-11 1-15 8l-71 112q-1 7 7 10c11 5 4 17-14 17-14 0-17-5-20-10q-4-6-15-7l-103-14-92-15q-8-1-14 3c-9 8-36 5-36-5 0-7 12-8 22-9q10-1 16-8l66-101q-1-8-9-16z" fill="#b1b1b1"/>
            </g>
            <path d="M459 359q11 12 33 4 6-4 14-3l92 15 104 13q10 2 16 10" fill="none" stroke="#d3d3d3"/>
            <g fill="#c0c0c0" stroke="#474747"><ellipse cx="569" cy="210" rx="11" ry="6"/><ellipse cx="830" cy="246" rx="11" ry="6"/><ellipse cx="738" cy="393" rx="11" ry="6"/><ellipse cx="475" cy="356" rx="10" ry="6"/></g>
            <g fill="#727272"><ellipse cx="569" cy="209" rx="8" ry="4"/><ellipse cx="830" cy="245" rx="8" ry="4"/><ellipse cx="738" cy="392" rx="8" ry="4"/><ellipse cx="475" cy="355" rx="8" ry="4"/></g>
            <g fill="#c5c5c5"><ellipse cx="570" cy="213" rx="6" ry="2"/><ellipse cx="831" cy="249" rx="6" ry="2"/><ellipse cx="739" cy="396" rx="6" ry="2"/><ellipse cx="476" cy="359" rx="6" ry="2"/></g>
            <!-- stylus -->
            <path d="M494 277l9 1" stroke="#eee" stroke-width="3"/><path d="M502 278l39 5" stroke="#060606" stroke-width="3"/>
            <!-- left pin -->
            <path d="M537 233l50 6-2 28-50-4c-6-2-6-28 2-30z" fill="url(#pinv)" stroke="#555" stroke-width=".6"/>
            <!-- block -->
            <path d="M731 219l2 17-1 53-56 84-12-20 20-80z" fill="#676767" stroke="#444" stroke-width=".7"/>
            <path d="M596 257l86 10v58l-84-11z" fill="#707070" stroke="#444" stroke-width=".7"/>
            <path d="M612 203l119 16-44 64-9-2 4-14-86-10-7 11-18-3z" fill="#adadad" stroke="#484848" stroke-width=".8"/>
            <path d="M596 257l85 10" stroke="#ddd" stroke-width=".8"/><path d="M598 315l60 8" stroke="#ddd"/>
            <path d="M576 270q14-5 20-2l2 46-23 47-4-30z" fill="#707070" stroke="#444" stroke-width=".7"/>
            <path d="M553 357l4-64c2-18 9-25 20-26l12 1c-10 4-14 14-14 30l-4 61z" fill="url(#arm1)" stroke="#444" stroke-width=".8"/>
            <ellipse cx="584" cy="305" rx="7" ry="18" fill="#ddd" stroke="#3e3e3e"/><path d="M584 288c7 7 7 27 0 34-5-7-5-26 0-34z" fill="#a1a1a1"/>
            <path d="M556 308h18M551 358l22 2" stroke="#dedede" fill="none" stroke-width=".8"/>
            <path d="M656 373l4-66c2-17 8-25 17-26l13 2c-9 3-12 13-13 27l-3 64z" fill="url(#arm1)" stroke="#444" stroke-width=".8"/>
            <ellipse cx="686" cy="314" rx="6" ry="20" fill="#ececec" stroke="#333"/><path d="M686 296c6 6 6 30 0 36-5-7-4-30 0-36z" fill="#b7b7b7"/>
            <path d="M658 320h18M655 373l20 2" fill="none" stroke="#ddd" stroke-width=".8"/>
            <!-- tube -->
            <ellipse cx="655" cy="237" rx="45" ry="23" fill="#aaa" stroke="#555"/><ellipse cx="654" cy="237" rx="42" ry="21" fill="#bbb" stroke="#484848"/>
            <path d="M613 155l2 83a39 19 0 0 0 77 0l-4-83z" fill="url(#tube)" stroke="#555" stroke-width=".6"/>
            <ellipse cx="650" cy="154" rx="38" ry="20" fill="#c0c0c0" stroke="#4c4c4c" stroke-width=".8"/><ellipse cx="650" cy="154" rx="33" ry="16" fill="url(#bore)" stroke="#414141"/><path d="M618 151a33 15 0 0 1 64 0" fill="none" stroke="#ddd" stroke-width="1.500"/>
            <!-- right pin -->
            <ellipse cx="718" cy="273" rx="8" ry="21" fill="#929292" stroke="#444"/><path d="M721 259l53 6 2 31-54-6c-6-5-6-25-1-31z" fill="url(#pinv)" stroke="#555" stroke-width=".6"/><ellipse cx="777" cy="281" rx="6" ry="15" fill="#5b5b5b" stroke="#c9c9c9"/>
            <!-- probe path -->
            <g fill="none" stroke="#28d62f" stroke-width="1.500"><path d="M682 319l45-10 50-45"/><path d="M729 284l41 5M728 288l41 5" stroke="#3a9c56"/><g stroke="#39c765" stroke-width="1"><circle cx="735" cy="258" r="3"/><circle cx="776" cy="264" r="3"/><circle cx="731" cy="293" r="3"/><circle cx="771" cy="299" r="3"/><path d="M727 282v9M769 288v10M732 260l6-3"/></g></g>
            <g fill="#28d62f"><circle cx="700" cy="315" r="2"/><circle cx="727" cy="309" r="2"/><circle cx="750" cy="287" r="2"/></g>
            <circle cx="543" cy="284" r="2.500" fill="#9d1e12"/>
            <path d="M671 360l11 9-5 1 3 4-3 1-3-4-3 4z" fill="#f00b0b"/>
            <text class="watermark" x="521" y="459">Simulated Data</text>
            <g class="triad"><path d="M362 478v-10" stroke="#1620b8" stroke-width="3"/><path d="M359 470l3-6 4 6z" fill="#1620b8"/><path d="M363 477l6-6" stroke="#1d9f30" stroke-width="3"/><path d="M362 478l11 1" stroke="#b81a1a" stroke-width="2"/><path d="M371 476l6 3-6 3z" fill="#b81a1a"/><text x="357" y="463" fill="#3038cf">Z</text><text x="369" y="467" fill="#25a238">Y</text><text x="379" y="483" fill="#b32222">X</text></g>
          </svg>
        </section>
      </div>

      <div class="toolbar bottom">
        <button class="tb on double" aria-label="Devices"><svg><use href="#dev"/></svg><i class="down"></i></button>
        <button class="tb" aria-label="Arm"><svg><use href="#dev2"/></svg></button><button class="dd" aria-label="Arm options"></button>
        <button class="tb" aria-label="Calibrate"><svg><use href="#dev3"/></svg></button><button class="dd" aria-label="Calibrate options"></button>
        <button class="tb" aria-label="Stop measuring"><svg><use href="#stop"/></svg></button><button class="tb on" aria-label="Simulate"><svg><use href="#clap"/></svg></button><button class="tb more" aria-label="Replay"><svg><use href="#clap2"/></svg></button>
        <i class="sep wide"></i>
        <button class="tb" aria-label="Machine"><svg><use href="#machine"/></svg></button><button class="tb" aria-label="Measure range"><svg><use href="#dial"/></svg></button>
        <i class="sep"></i>
        <button class="tb" aria-label="Tool"><svg><use href="#tool"/></svg></button>
        <span class="combo tool"><select aria-label="Tool"><option>TP20-SF 50x5 mm</option></select></span><span class="combo angle"><select aria-label="Orientation"><option>A90.0 B90.0</option></select></span>
        <button class="tb" aria-label="Pick"><svg><use href="#arrowp"/></svg></button><button class="dd" aria-label="Pick options"></button>
        <button class="tb" aria-label="Qualify"><svg><use href="#pair"/></svg></button><i class="gap wide"></i><button class="tb" aria-label="Temperature"><svg><use href="#therm"/></svg></button><button class="dd" aria-label="Temperature options"></button><button class="tb" aria-label="Probe axes"><svg><use href="#probeax"/></svg></button>
        <i class="sep wide"></i>
        <button class="tb" aria-label="Home"><svg><use href="#home"/></svg></button><button class="dd" aria-label="Home options"></button><button class="tb" aria-label="Clear path"><svg><use href="#clearp"/></svg></button>
        <i class="sep wide"></i>
        <button class="tb" aria-label="Record point"><svg><use href="#disc"/></svg></button><button class="tb" aria-label="End"><svg><use href="#square"/></svg></button>
        <i class="sep wide"></i>
        <button class="tb" aria-label="Undo point"><svg><use href="#undog"/></svg></button><button class="tb" aria-label="Undo points"><svg><use href="#undop"/></svg></button>
        <i class="sep wide"></i>
        <button class="tb" aria-label="Targets"><svg><use href="#targets"/></svg></button><button class="dd" aria-label="Target options"></button><button class="tb" aria-label="Accept target"><svg><use href="#targetok"/></svg></button><button class="tb" aria-label="Move device"><svg><use href="#armx"/></svg></button><i class="sep"></i><button class="tb" aria-label="Device position"><svg><use href="#arm"/></svg></button>
      </div>
    </div>

    <div class="sidebar">
      <button class="tb more" aria-label="Navigate"><svg><use href="#move"/></svg></button><button class="tb more" aria-label="Standard views"><svg><use href="#axes"/></svg></button><button class="tb" aria-label="View plane"><svg><use href="#plane"/></svg></button><button class="tb" aria-label="Fit"><svg><use href="#fit"/></svg></button><button class="tb" aria-label="Zoom on pick"><svg><use href="#handmag"/></svg></button><button class="tb more" aria-label="Visibility"><svg><use href="#eye"/></svg></button><button class="tb more" aria-label="Clipping"><svg><use href="#box"/></svg></button><button class="tb more" aria-label="Display"><svg><use href="#monitor"/></svg></button>
      <i class="hsep"></i>
      <button class="tb" aria-label="Color scale"><svg><use href="#cubemap"/></svg></button>
      <div class="pair"><button class="tb" aria-label="Annotation colors"><svg><use href="#flagmap"/></svg></button><button class="dd" aria-label="Annotation color options"></button></div>
      <button class="tb" aria-label="Edit color scale"><svg><use href="#wrenchmap"/></svg></button>
      <i class="hsep wide"></i>
      <button class="tb" aria-label="Move annotation"><svg><use href="#flagmove"/></svg></button>
      <i class="hsep wide"></i>
      <div class="pair"><button class="tb" aria-label="Select by hand"><svg><use href="#hand"/></svg></button><button class="dd" aria-label="Selection options"></button></div>
      <i class="hsep wide"></i>
      <button class="tb" aria-label="Surface window"><svg><use href="#winsh"/></svg></button><button class="tb more" aria-label="Surface patch"><svg><use href="#patch"/></svg></button><button class="tb" aria-label="Exchange"><svg><use href="#flow"/></svg></button>
    </div>
  </div>

  <footer class="status">
    <button><svg><use href="#ball"/></svg><i class="down"></i></button><button><svg><use href="#green"/></svg></button><button><svg><use href="#pos"/></svg>position 1<i class="down"></i></button><button><svg><use href="#tealcube"/></svg><i class="down"></i></button><button>layer 1<i class="down"></i></button><button>mm<i class="down"></i></button><button><svg><use href="#snap"/></svg><i class="down"></i></button><button><svg><use href="#sync"/></svg><i class="down"></i></button>
  </footer>
</div>
</body>
</html>
```
FILE: styles.css
```css
* { box-sizing: border-box; }
html, body { height: 100%; }
body {
  margin: 0;
  padding: 1px 5px 2px 1px;
  background: #fff;
  color: #111;
  font: 6px/8px Lato, "Open Sans", sans-serif;
}
.defs { position: absolute; width: 0; height: 0; }
h1, h2, p, ul { margin: 0; padding: 0; font-size: inherit; font-weight: normal; }
ul { list-style: none; }
button, input, select {
  font: inherit;
  color: inherit;
  border: 0;
  border-radius: 0;
  padding: 0;
  margin: 0;
  background: none;
  outline: 0;
}
svg { display: block; flex: none; }
.i8 { width: 8px; height: 8px; }
.i6 { width: 6px; height: 6px; }

.window {
  display: flex;
  flex-direction: column;
  height: 100%;
  border: 1px solid #ccc;
  border-left-color: #333;
  background: #ededed;
}

.titlebar { display: flex; align-items: center; gap: 3px; height: 12px; padding-left: 1px; background: #fff; }
.caption { display: flex; margin-left: auto; }
.caption button { width: 22px; display: grid; place-items: center; }
.caption svg { width: 6px; height: 6px; }

.menubar { display: flex; align-items: center; gap: 8px; height: 14px; padding-left: 9px; }
.menubar button::first-letter, .seq-menu button::first-letter { text-decoration: underline 1px #888; text-underline-offset: 1px; }
.search { display: flex; align-items: center; width: 93px; height: 10px; margin-left: auto; margin-right: 2px; padding: 0 3px; background: #fff; border: 1px solid #e1e1e1; }
.search input { flex: 1; min-width: 0; height: 8px; }
.search input::placeholder { color: #777; opacity: 1; }

.toolbar { display: flex; align-items: center; height: 20px; flex: none; }
.toolbar.main { padding-left: 4px; }
.toolbar.bottom { padding-left: 4px; height: 21px; }
.tb { position: relative; display: grid; place-items: center; width: 19px; height: 19px; flex: none; }
.tb svg { width: 15px; height: 15px; }
.tb.on { background: #fdd583; border: 1px solid #f0bd62; }
.tb.double { display: flex; align-items: center; justify-content: center; width: 26px; }
.tb.double svg { width: 18px; }
.tb.more::after { content: ""; position: absolute; right: 0; bottom: 1px; border: 1px solid transparent; border-right-color: #222; border-bottom-color: #222; }
.dd { display: grid; place-items: center; width: 5px; height: 19px; flex: none; }
.dd::before, .down, .combo::after {
  content: "";
  display: block;
  width: 0;
  border: 2px solid transparent;
  border-top-color: #222;
  border-bottom: 0;
}
.gap { width: 3px; flex: none; }
.gap.wide { width: 5px; }
.sep { width: 1px; height: 16px; background: #ccc; flex: none; }
.sep.wide { margin: 0 2px; }

.body { display: flex; flex: 1; min-height: 0; }
.center { display: flex; flex-direction: column; flex: 1; min-width: 0; }
.panels { display: grid; grid-template-columns: 163px 169px minmax(0, 1fr); gap: 2px; flex: 1; min-height: 0; }
.panels > section { display: flex; flex-direction: column; min-width: 0; min-height: 0; }
.head { display: flex; align-items: center; height: 10px; padding: 0 3px 0 1px; background: #a9bccb; flex: none; }
.head.active { background: #82a0ba; }
.tools { display: flex; align-items: center; gap: 6px; margin-left: auto; }
.close { width: 5px; height: 5px; }
.pin { width: 3px; height: 5px; background: #33465a; border-bottom: 1px solid #111; }

.combo { display: flex; align-items: center; background: #fff; padding-right: 3px; }
.combo select { flex: 1; min-width: 0; appearance: none; height: 10px; }
.combo-row { display: flex; align-items: center; height: 16px; }
.combo-row .combo { width: 144px; height: 12px; padding-left: 1px; }
.combo-row .tb { height: 14px; }
.combo-row .tb svg { width: 12px; height: 12px; }
.tree-box { flex: 1; min-height: 0; background: #fff; }
.tree { display: grid; grid-auto-rows: minmax(0, 1fr); height: 230px; margin-top: 1px; }
.tree li { display: flex; align-items: center; gap: 3px; white-space: nowrap; }
.tree svg { width: 8px; height: 8px; }
.tree .l1 { padding-left: 2px; }
.tree .l2 { padding-left: 11px; background: linear-gradient(#ccc, #ccc) 4px 0 / 1px 100% no-repeat; }
.tree .l3 { padding-left: 20px; background: linear-gradient(#ccc, #ccc) 13px 0 / 1px 100% no-repeat; }
.ex { width: 5px; height: 5px; flex: none; border: 1px solid #bbb; background: linear-gradient(#777, #777) center / 3px 1px no-repeat #fff; }
.leaf { width: 5px; height: 1px; flex: none; background: #ccc; }
.picked { background: #2a80d0; color: #cfe6fa; }
.tabs { display: flex; height: 12px; flex: none; }
.tabs button { padding: 0 4px 0 3px; background: #ddd; }
.tabs button.active { background: #fafafa; padding: 0 2px; }

.seq-menu { display: flex; align-items: center; gap: 9px; height: 12px; padding-left: 9px; }
.seq-tools { display: flex; align-items: center; height: 16px; padding-left: 3px; }
.seq-tools .tb { width: 16px; height: 14px; }
.seq-tools .tb svg { width: 11px; height: 11px; }
.seq-tools .dd { width: 7px; height: 14px; }
.seq-box { flex: 1; min-height: 0; margin-bottom: 10px; background: #fff; }
.steps { display: grid; grid-template-rows: repeat(3, minmax(0, 1fr)) 41px; grid-auto-rows: minmax(0, 1fr); height: 361px; font-family: "Liberation Sans", sans-serif; font-size: 5px; line-height: 6px; }
.steps li { display: grid; grid-template-columns: 18px 12px 8px minmax(0, 1fr) 8px; align-items: center; white-space: nowrap; }
.steps span { text-align: right; }
.steps i { justify-self: center; }
.steps svg { width: 8px; height: 7px; }
.steps p { padding-left: 1px; }
.steps button { display: grid; place-items: center; height: 8px; }
.steps button::before { content: ""; border: 2px solid transparent; border-top-color: #222; border-bottom: 0; }
.steps .done { background: #c6fdc3; }
.steps .tall { align-items: start; padding-top: 2px; }
.steps .prompt { grid-template-columns: 30px 1fr; background: #d3deec; }
.steps .prompt svg { justify-self: center; }
.steps .sel { background: #0a66cc; color: #a9d0f5; }

.scene { width: 100%; flex: 1; min-height: 0; }
.engrave { fill: #ddd; font: 6px "Liberation Serif", serif; }
.watermark { fill: none; stroke: #424242; stroke-width: 1px; font: 31px "Liberation Sans", sans-serif; }
.triad text { font: 6px "Liberation Sans", sans-serif; }

.toolbar .combo { height: 10px; }
.toolbar .combo.tool { width: 62px; padding-left: 1px; }
.toolbar .combo.angle { width: 44px; margin-left: 1px; padding-left: 1px; }

.sidebar { display: flex; flex-direction: column; align-items: center; width: 27px; padding-top: 4px; border-top: 1px dotted #bbb; flex: none; }
.sidebar .pair { display: flex; margin-left: 5px; }
.hsep { width: 21px; height: 1px; background: #ccc; flex: none; }
.hsep.wide { margin: 1px 0 2px; }

.status { display: flex; justify-content: flex-end; height: 11px; flex: none; border-top: 1px solid #ccc; }
.status button { display: flex; align-items: center; gap: 4px; padding: 0 2px; border-left: 1px solid #d5d5d5; }
.status svg { width: 8px; height: 8px; }
```
